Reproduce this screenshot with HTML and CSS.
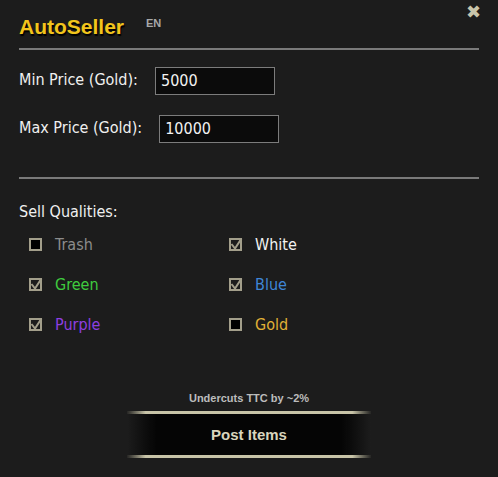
FILE: index.html
```html
<!DOCTYPE html>
<html>
<head>
<meta charset="utf-8">
<link rel="stylesheet" href="styles.css">
</head>
<body>
<div class="panel">
  <div class="header">
    <h1 class="title">AutoSeller</h1>
    <span class="lang">EN</span>
    <span class="close">&#x2716;</span>
  </div>
  <div class="rule"></div>
  <div class="field first">
    <label class="label">Min Price (Gold):</label>
    <div class="input in-min">5000</div>
  </div>
  <div class="field second">
    <label class="label">Max Price (Gold):</label>
    <div class="input in-max">10000</div>
  </div>
  <div class="rule rule2"></div>
  <div class="section">Sell Qualities:</div>
  <div class="grid">
    <div class="opt"><span class="box"></span><span class="q trash">Trash</span></div>
    <div class="opt"><span class="box on"><svg viewBox="0 0 14 14" width="14" height="14"><path d="M2.5 7 L6 11.5 L12.5 1.5" fill="none" stroke="#a39f8b" stroke-width="2"/></svg></span><span class="q white">White</span></div>
    <div class="opt"><span class="box on"><svg viewBox="0 0 14 14" width="14" height="14"><path d="M2.5 7 L6 11.5 L12.5 1.5" fill="none" stroke="#a39f8b" stroke-width="2"/></svg></span><span class="q green">Green</span></div>
    <div class="opt"><span class="box on"><svg viewBox="0 0 14 14" width="14" height="14"><path d="M2.5 7 L6 11.5 L12.5 1.5" fill="none" stroke="#a39f8b" stroke-width="2"/></svg></span><span class="q blue">Blue</span></div>
    <div class="opt"><span class="box on"><svg viewBox="0 0 14 14" width="14" height="14"><path d="M2.5 7 L6 11.5 L12.5 1.5" fill="none" stroke="#a39f8b" stroke-width="2"/></svg></span><span class="q purple">Purple</span></div>
    <div class="opt"><span class="box"></span><span class="q gold">Gold</span></div>
  </div>
  <div class="footer">
    <div class="note">Undercuts TTC by ~2%</div>
    <div class="button">Post Items</div>
  </div>
</div>
</body>
</html>
```
FILE: styles.css
```css
html, body {
  margin: 0;
  padding: 0;
  background: #1c1c1c;
}
body {
  width: 498px;
  height: 477px;
  overflow: hidden;
  font-family: "DejaVu Sans Condensed", "Liberation Sans", sans-serif;
  color: #f0f0f0;
}
.panel {
  padding: 0 19px;
  display: flex;
  flex-direction: column;
}
.header {
  display: flex;
  align-items: flex-start;
  height: 47px;
}
.title {
  margin: 14px 0 0 0;
  font-family: "Liberation Sans", sans-serif;
  font-weight: bold;
  font-size: 21px;
  line-height: 26px;
  color: #f2c51c;
  text-shadow: 1px 2px 1px #000;
}
.lang {
  margin: 17px 0 0 22px;
  font-family: "Liberation Sans", sans-serif;
  font-size: 11px;
  font-weight: bold;
  color: #a8a8a8;
}
.close {
  margin: 1px -2px 0 auto;
  font-family: "DejaVu Sans", sans-serif;
  font-size: 18px;
  line-height: 22px;
  color: #c9c5ab;
}
.rule {
  height: 2px;
  background: #7a7a7a;
  margin-top: 1px;
}
.field {
  display: flex;
  align-items: center;
  height: 28px;
}
.field.first { margin-top: 17px; }
.field.second { margin-top: 20px; }
.label {
  font-size: 16px;
  color: #f0f0f0;
  position: relative;
  top: -2px;
}
.input {
  box-sizing: border-box;
  height: 28px;
  width: 120px;
  border: 1px solid #7c7c7c;
  background: #0b0b0b;
  font-size: 16px;
  line-height: 26px;
  padding-left: 5px;
  color: #f2f2f2;
}
.in-min { margin-left: 17px; }
.in-max { margin-left: 17px; }
.rule2 { margin-top: 34px; }
.section {
  margin-top: 23px;
  font-size: 16px;
  line-height: 20px;
}
.grid {
  display: grid;
  grid-template-columns: 200px 200px;
  grid-auto-rows: 40px;
  margin-top: 2px;
  padding-left: 10px;
}
.opt {
  display: flex;
  align-items: center;
}
.box {
  position: relative;
  box-sizing: border-box;
  width: 13px;
  height: 13px;
  border: 2px solid #a39f8b;
  background: #000;
  margin-right: 13px;
}
.box svg {
  position: absolute;
  left: -2px;
  top: -3px;
}
.box.on { background: #1c1c1c; }
.q { font-size: 16px; }
.trash { color: #8c8c8c; }
.white { color: #f2f2f2; }
.green { color: #3fcb3f; }
.blue { color: #3f86d6; }
.purple { color: #8e3fe0; }
.gold { color: #e1b136; }
.footer {
  display: flex;
  flex-direction: column;
  align-items: center;
  margin-top: 47px;
}
.note {
  font-family: "Liberation Sans", sans-serif;
  font-weight: bold;
  font-size: 11px;
  color: #bcbcbc;
  line-height: 14px;
}
.button {
  margin-top: 6px;
  width: 244px;
  height: 47px;
  box-sizing: border-box;
  display: flex;
  align-items: center;
  justify-content: center;
  font-family: "Liberation Sans", sans-serif;
  font-weight: bold;
  font-size: 15px;
  color: #d9d5bd;
  background: linear-gradient(to right, rgba(0,0,0,0) 0%, #050505 12%, #050505 88%, rgba(0,0,0,0) 100%);
  border-top: 3px solid;
  border-bottom: 3px solid;
  border-image: linear-gradient(to right, rgba(200,196,168,0) 0%, #c8c4a8 8%, #c8c4a8 92%, rgba(200,196,168,0) 100%) 1;
}
```
